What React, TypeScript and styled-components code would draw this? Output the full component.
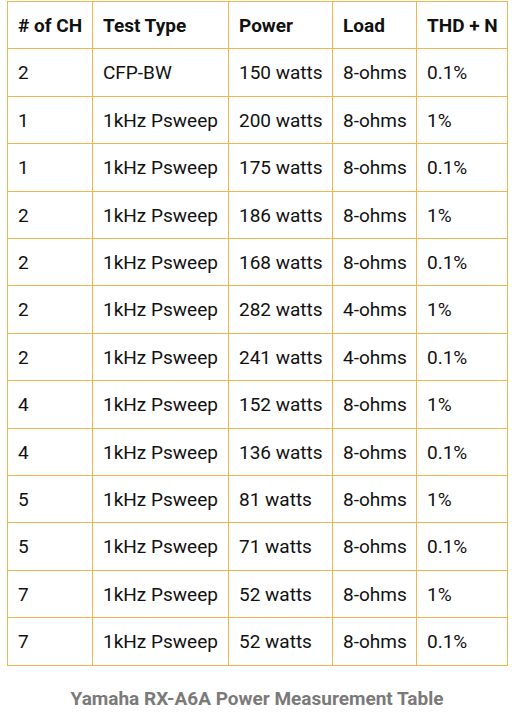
import React from 'react';
import styled, { createGlobalStyle } from 'styled-components';

const GlobalStyle = createGlobalStyle`
  html, body {
    margin: 0;
    padding: 0;
    background: #fff;
  }
  body {
    font-family: Roboto, "Liberation Sans", sans-serif;
  }
`;

const Figure = styled.figure`
  margin: 0;
  padding: 1px 5px 0 7px;
  width: 500px;
`;

const Table = styled.table`
  width: 500px;
  border-collapse: collapse;
  table-layout: fixed;
  font-size: 19px;
  line-height: 26.4px;
  color: #111;
`;

const Th = styled.th<{ $w: number }>`
  box-sizing: border-box;
  width: ${p => p.$w}px;
  text-align: left;
  font-weight: 700;
  padding: 11px 8px 9px 10px;
  border: 1px solid #f2b54f;
  white-space: nowrap;
`;

const Td = styled.td`
  padding: 11px 8px 9px 10px;
  border: 1px solid #f2b54f;
  white-space: nowrap;
`;

const Caption = styled.figcaption`
  margin-top: 21px;
  text-align: center;
  font-size: 19px;
  font-weight: 700;
  color: #7a7a7a;
`;

const headers: [string, number][] = [
  ['# of CH', 85],
  ['Test Type', 136],
  ['Power', 104],
  ['Load', 84],
  ['THD + N', 91],
];

const rows: string[][] = [
  ['2', 'CFP-BW', '150 watts', '8-ohms', '0.1%'],
  ['1', '1kHz Psweep', '200 watts', '8-ohms', '1%'],
  ['1', '1kHz Psweep', '175 watts', '8-ohms', '0.1%'],
  ['2', '1kHz Psweep', '186 watts', '8-ohms', '1%'],
  ['2', '1kHz Psweep', '168 watts', '8-ohms', '0.1%'],
  ['2', '1kHz Psweep', '282 watts', '4-ohms', '1%'],
  ['2', '1kHz Psweep', '241 watts', '4-ohms', '0.1%'],
  ['4', '1kHz Psweep', '152 watts', '8-ohms', '1%'],
  ['4', '1kHz Psweep', '136 watts', '8-ohms', '0.1%'],
  ['5', '1kHz Psweep', '81 watts', '8-ohms', '1%'],
  ['5', '1kHz Psweep', '71 watts', '8-ohms', '0.1%'],
  ['7', '1kHz Psweep', '52 watts', '8-ohms', '1%'],
  ['7', '1kHz Psweep', '52 watts', '8-ohms', '0.1%'],
];

const App: React.FC = () => {
  return (
    <>
      <GlobalStyle />
      <Figure>
        <Table>
          <thead>
            <tr>
              {headers.map(([h, w]) => (
                <Th key={h} $w={w}>{h}</Th>
              ))}
            </tr>
          </thead>
          <tbody>
            {rows.map((r, i) => (
              <tr key={i}>
                {r.map((c, j) => (
                  <Td key={j}>{c}</Td>
                ))}
              </tr>
            ))}
          </tbody>
        </Table>
        <Caption>Yamaha RX-A6A Power Measurement Table</Caption>
      </Figure>
    </>
  );
};

export default App;
